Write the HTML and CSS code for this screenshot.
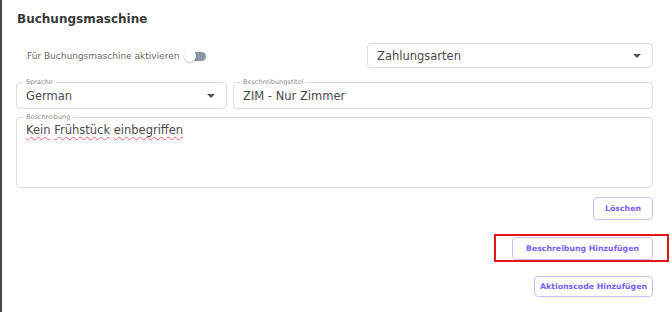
FILE: index.html
```html
<!DOCTYPE html>
<html lang="de">
<head>
    <meta charset="UTF-8">
    <title>Buchungsmaschine</title>
    <link rel="stylesheet" href="styles.css">
</head>
<body>
    <div class="panel">
        <h2 class="panel-title">Buchungsmaschine</h2>

        <div class="top-row">
            <div class="toggle-row">
                <span class="toggle-label">Für Buchungsmaschine aktivieren</span>
                <span class="switch"><span class="switch-track"></span><span class="switch-thumb"></span></span>
            </div>
            <div class="select plain">
                <span>Zahlungsarten</span>
                <span class="caret"></span>
            </div>
        </div>

        <div class="field-row">
            <fieldset class="field lang">
                <legend>Sprache</legend>
                <div class="field-value">
                    <span>German</span>
                    <span class="caret"></span>
                </div>
            </fieldset>
            <fieldset class="field title">
                <legend>Beschreibungstitel</legend>
                <div class="field-value">ZIM - Nur Zimmer</div>
            </fieldset>
        </div>

        <fieldset class="field area">
            <legend>Beschreibung</legend>
            <div class="field-value"><span class="typo">Kein</span> <span class="typo">Frühstück</span> <span class="typo">einbegriffen</span></div>
        </fieldset>

        <div class="actions">
            <button class="btn delete">Löschen</button>
            <div class="highlight">
                <button class="btn wide">Beschreibung Hinzufügen</button>
            </div>
            <button class="btn small">Aktionscode Hinzufügen</button>
        </div>
    </div>
</body>
</html>
```

FILE: styles.css
```css
* {
    margin: 0;
    padding: 0;
    box-sizing: border-box;
}

body {
    font-family: 'DejaVu Sans', sans-serif;
    background: white;
    width: 670px;
    height: 312px;
    overflow: hidden;
}

.panel {
    height: 312px;
    border-left: 2px solid #424a53;
    padding: 12px 17px 0 14px;
}

.panel-title {
    font-size: 12px;
    font-weight: 600;
    color: #3a3a3a;
    height: 14px;
    line-height: 14px;
    margin-left: 1px;
}

.top-row {
    display: flex;
    justify-content: space-between;
    align-items: center;
    margin-top: 17px;
}

.toggle-row {
    display: flex;
    align-items: center;
    margin-left: 11px;
}

.toggle-label {
    font-size: 9px;
    color: #6a6a6a;
}

.switch {
    position: relative;
    width: 24px;
    height: 12px;
    margin-left: 5px;
}

.switch-track {
    position: absolute;
    left: 6px;
    top: 2px;
    width: 16px;
    height: 9px;
    border-radius: 5px;
    background: #8996a4;
}

.switch-thumb {
    position: absolute;
    left: 0;
    top: 0;
    width: 12px;
    height: 12px;
    border-radius: 50%;
    background: white;
    box-shadow: 0 1px 2px rgba(0,0,0,0.25);
}

.select {
    display: flex;
    align-items: center;
    justify-content: space-between;
    border: 1px solid #dcdcdc;
    border-radius: 4px;
    font-size: 11.5px;
    color: #4a4a4a;
}

.select.plain {
    width: 286px;
    height: 25px;
    padding: 0 9px;
}

.caret {
    width: 0;
    height: 0;
    border-left: 4px solid transparent;
    border-right: 4px solid transparent;
    border-top: 4px solid #555;
    margin-right: 2px;
}

.field-row {
    display: flex;
    gap: 6px;
    margin-top: 11px;
}

.field {
    border: 1px solid #dcdcdc;
    border-radius: 4px;
    padding: 0 9px;
    min-width: 0;
}

.field legend {
    font-size: 6.5px;
    color: #8a8a8a;
    padding: 0 3px;
    margin-left: -3px;
    line-height: 7px;
}

.field-value {
    display: flex;
    align-items: center;
    justify-content: space-between;
    font-size: 11.5px;
    color: #4a4a4a;
    height: 24px;
    margin-top: -2px;
}

.field.lang {
    width: 211px;
}

.field.title {
    flex: 1;
}

.field.area {
    margin-top: 5px;
    height: 74px;
}

.field.area .field-value {
    display: block;
    height: auto;
    line-height: 14px;
    margin-top: 2px;
}

.typo {
    text-decoration: underline wavy #e06666;
    text-decoration-thickness: 1px;
    text-underline-offset: 2px;
}

.actions {
    display: flex;
    flex-direction: column;
    align-items: flex-end;
    margin-top: 9px;
}

.btn {
    font-family: 'DejaVu Sans', sans-serif;
    font-size: 7.8px;
    font-weight: 600;
    color: #7a5df0;
    background: white;
    border: 1px solid #c9bff7;
    border-radius: 4px;
    height: 23px;
    padding: 0 8px;
    white-space: nowrap;
}

.btn.delete {
    padding: 0 11px;
}

.btn.wide {
    padding: 0 13px;
}

.btn.small {
    height: 21px;
    padding: 0 5px;
    margin-top: 14px;
}

.highlight {
    border: 2px solid #e0161b;
    margin-top: 14px;
    margin-right: -16px;
    padding: 0 14px 0 16px;
    height: 28px;
    width: 175px;
    display: flex;
    align-items: center;
    justify-content: flex-end;
}
```
